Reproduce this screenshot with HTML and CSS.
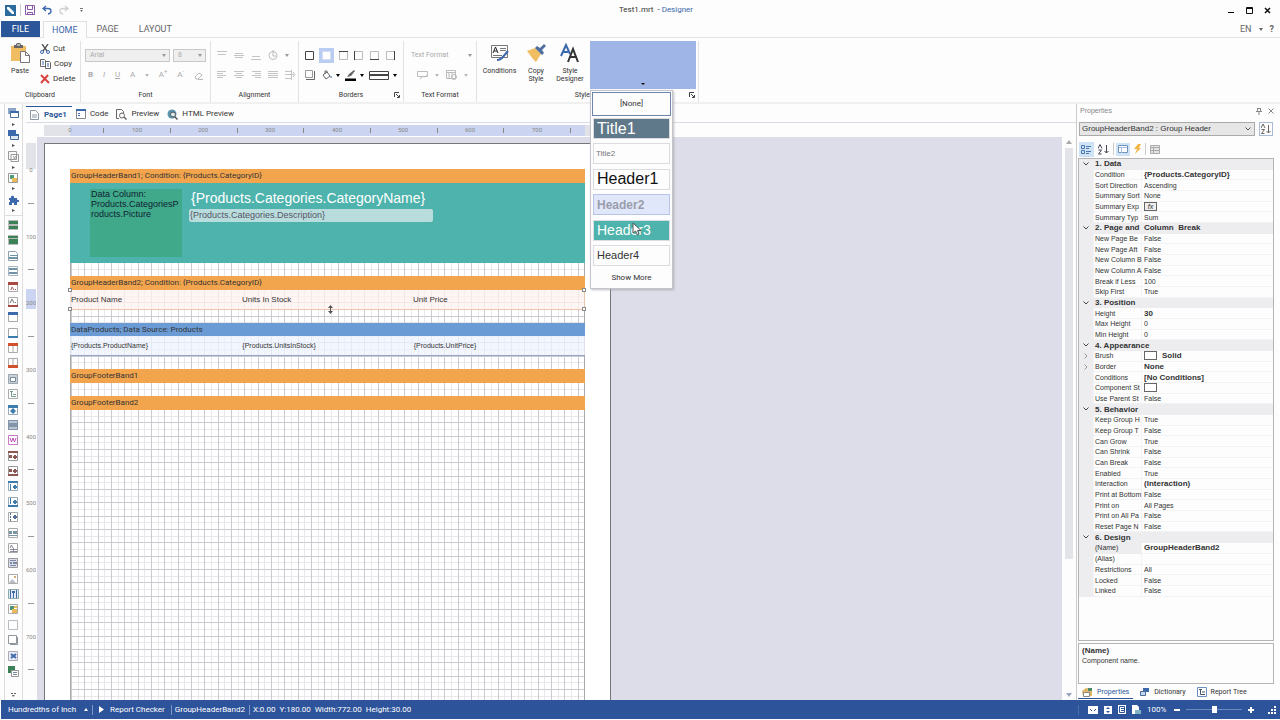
FILE: index.html
```html
<!DOCTYPE html>
<html lang="en">
<head>
<meta charset="UTF-8" />
<meta name="viewport" content="width=device-width, initial-scale=1.0"/>
<title>Test1.mrt - Designer</title>
<link rel="stylesheet" href="styles.css">
</head>
<body>
<header class="titlebar">
  <div class="quick-access">
    <svg width="11" height="11" viewBox="0 0 11 11"><path fill="#2b6b9e" d="M0 0h11v11H0z"/><path fill="#fff" d="M2 2h2l5 5v2H7L2 4z"/></svg>
    <span class="divider"></span>
    <button aria-label="Save"><svg width="10" height="10" viewBox="0 0 10 10" fill="none" stroke="#8a5aa8"><path d="M.5.5h9v9h-9zM2.500.5v4h5v-4M2.500 9.500v-2h5v2"/></svg></button>
    <button aria-label="Undo"><svg width="10" height="10" viewBox="0 0 10 10" fill="none" stroke="#3c68ac" stroke-width="1.300"><path d="M4 1L1 3.500 4 6M1 3.500h5c4 0 4 5 0 5.500"/></svg></button>
    <button aria-label="Redo"><svg width="10" height="10" viewBox="0 0 10 10" fill="none" stroke="#cfcfcf" stroke-width="1.300"><path d="M6 1l3 2.500L6 6M9 3.500H4c-4 0-4 5 0 5.500"/></svg></button>
    <button class="more" aria-label="Customize"><svg width="5" height="5" viewBox="0 0 5 5" fill="#777"><path d="M1 0h3v1H1zM1 2h3L2.500 4z"/></svg></button>
  </div>
  <div class="doc-title">Test1.mrt &nbsp;- <span>Designer</span></div>
  <div class="window-buttons">
    <button aria-label="Minimize"><svg width="7" height="7"><path d="M0 5h6v1H0z"/></svg></button>
    <button aria-label="Maximize"><svg width="7" height="7" fill="none" stroke="#111"><path d="M.5.5h6v6h-6zM0 1.500h7"/></svg></button>
    <button aria-label="Close"><svg width="7" height="7" stroke="#111" stroke-width="1.500"><path d="M1 1l5 5M6 1L1 6"/></svg></button>
  </div>
</header>

<nav class="tabs">
  <button class="file">FILE</button>
  <button class="active">HOME</button>
  <button>PAGE</button>
  <button>LAYOUT</button>
  <div class="lang">
    <button>EN</button>
    <svg width="4" height="3" fill="#666"><path d="M0 0h4L2 3z"/></svg>
    <button class="help">?</button>
  </div>
</nav>

<section class="ribbon">
  <div class="group clipboard">
    <div class="tools">
      <button class="big">
        <svg width="20" height="20" viewBox="0 0 20 20"><path fill="#f0bd62" d="M1 3h15v15H1z"/><path fill="#666" d="M4 2h2c0-3 5-3 5 0h2v3H4z"/><path fill="#fff" d="M7 1.500h3v1H7z"/><path fill="#fff" stroke="#777" d="M10.500 8.500h5l4 4v7h-9zM15.500 8.500v4h4"/></svg>
        Paste
      </button>
      <div class="stack">
        <button><svg width="10" height="10" viewBox="0 0 10 10" fill="none"><path stroke="#555" stroke-width="1.300" d="M2 0l5 7M8 0L3 7"/><circle cx="2" cy="8" r="1.500" stroke="#3c68ac"/><circle cx="8" cy="8" r="1.500" stroke="#3c68ac"/></svg>Cut</button>
        <button><svg width="11" height="10" viewBox="0 0 11 10" fill="#fff" stroke="#666"><path d="M.5.5h4l1 1v6h-5zM5.500 2.500h4l1 1v6h-5z"/><path stroke="#3c68ac" d="M2 3h2M2 5h2M7 5h2M7 7h2"/></svg>Copy</button>
        <button><svg width="10" height="10" viewBox="0 0 10 10" stroke="#d8453e" stroke-width="2"><path d="M1 1l8 8M8 1L1 9"/></svg>Delete</button>
      </div>
    </div>
    <h2>Clipboard</h2>
  </div>

  <div class="group font">
    <div class="tools rows">
      <div class="row">
        <label class="pick wide"><select aria-label="Font name" disabled><option>Arial</option></select><svg width="4" height="3" fill="#999"><path d="M0 0h4L2 3z"/></svg></label>
        <label class="pick"><select aria-label="Font size" disabled><option>8</option></select><svg width="4" height="3" fill="#999"><path d="M0 0h4L2 3z"/></svg></label>
      </div>
      <div class="row letters">
        <button disabled><b>B</b></button>
        <button disabled><i>I</i></button>
        <button disabled><u>U</u></button>
        <button disabled>A</button>
        <svg width="4" height="3" fill="#bbb"><path d="M0 0h4L2 3z"/></svg>
        <button disabled>A<sup>+</sup></button>
        <button disabled>A<sup>-</sup></button>
        <button disabled aria-label="Clear format"><svg width="9" height="9" viewBox="0 0 9 9" fill="none" stroke="#bbb"><path d="M1 6l4-4 3 2-4 4H2zM4 8.500h5"/></svg></button>
      </div>
    </div>
    <h2>Font</h2>
  </div>

  <div class="group alignment">
    <div class="tools rows">
      <div class="row">
        <button disabled aria-label="Top"><svg width="10" height="10" stroke="#c4c4c4"><path d="M0 1.500h10M1 4.500h8"/></svg></button>
        <button disabled aria-label="Middle"><svg width="10" height="10" stroke="#c4c4c4"><path d="M1 3.500h8M0 5.500h10M1 7.500h8"/></svg></button>
        <button disabled aria-label="Bottom"><svg width="10" height="10" stroke="#c4c4c4"><path d="M1 6.500h8M0 9.500h10"/></svg></button>
        <button disabled aria-label="Angle"><svg width="10" height="10" viewBox="0 0 10 10" fill="none" stroke="#bbb"><circle cx="5" cy="5.500" r="4"/><path d="M5 0v6h3"/></svg></button>
        <svg width="4" height="3" fill="#999"><path d="M0 0h4L2 3z"/></svg>
      </div>
      <div class="row">
        <button disabled aria-label="Left"><svg width="10" height="10" stroke="#c4c4c4"><path d="M0 1.500h9M0 3.500h6M0 5.500h9M0 7.500h6"/></svg></button>
        <button disabled aria-label="Center"><svg width="10" height="10" stroke="#c4c4c4"><path d="M0 1.500h10M2 3.500h6M0 5.500h10M2 7.500h6"/></svg></button>
        <button disabled aria-label="Right"><svg width="10" height="10" stroke="#c4c4c4"><path d="M1 1.500h9M4 3.500h6M1 5.500h9M4 7.500h6"/></svg></button>
        <button disabled aria-label="Justify"><svg width="10" height="10" stroke="#c4c4c4"><path d="M0 1.500h10M0 3.500h10M0 5.500h10M0 7.500h10"/></svg></button>
        <button disabled aria-label="Word wrap"><svg width="11" height="10" fill="none" stroke="#c4c4c4"><path d="M0 1.500h6M0 8.500h6M0 4.500h9M8 2l2 2.500L8 7M6.500 0v10"/></svg></button>
      </div>
    </div>
    <h2>Alignment</h2>
  </div>

  <div class="group borders">
    <div class="tools rows">
      <div class="row">
        <button aria-label="All"><svg width="9" height="9" fill="none" stroke="#444"><path d="M.5.5h8v8h-8z"/></svg></button>
        <button class="on" aria-label="None"><svg width="9" height="9" fill="#fff" stroke="#d3dcf0"><path d="M.5.5h8v8h-8z"/></svg></button>
        <button aria-label="Top border"><svg width="9" height="9" fill="none" stroke="#bbb"><path d="M.5.5h8v8h-8z"/><path stroke="#444" d="M0 .5h9"/></svg></button>
        <button aria-label="Left border"><svg width="9" height="9" fill="none" stroke="#bbb"><path d="M.5.5h8v8h-8z"/><path stroke="#444" d="M.5 0v9"/></svg></button>
        <button aria-label="Bottom border"><svg width="9" height="9" fill="none" stroke="#bbb"><path d="M.5.5h8v8h-8z"/><path stroke="#444" d="M0 8.500h9"/></svg></button>
        <button aria-label="Right border"><svg width="9" height="9" fill="none" stroke="#bbb"><path d="M.5.5h8v8h-8z"/><path stroke="#444" d="M8.500 0v9"/></svg></button>
      </div>
      <div class="row">
        <button aria-label="Shadow"><svg width="10" height="10" fill="none" stroke="#999"><path d="M.5.5h7v7h-7z"/><path stroke="#666" d="M1 9.500h8.500V1"/></svg></button>
        <button aria-label="Fill"><svg width="10" height="10" viewBox="0 0 10 10" fill="none" stroke="#666"><path d="M1 5l4-3 3 4-4 3zM3 4V1h2v2"/><path stroke="#3c68ac" d="M9 6v2"/></svg></button>
        <svg width="4" height="3"><path d="M0 0h4L2 3z"/></svg>
        <button aria-label="Line color"><svg width="11" height="11" viewBox="0 0 11 11"><path fill="#666" d="M2 7l2-3 5-4 1 1-4 5z"/><path d="M0 8.500h11V11H0z"/></svg></button>
        <svg width="4" height="3"><path d="M0 0h4L2 3z"/></svg>
        <button aria-label="Line style"><svg width="20" height="9" fill="none" stroke="#444"><path d="M.5.5h19v8H.5z"/><path stroke-width="2" d="M1 4h18"/></svg></button>
        <svg width="4" height="3"><path d="M0 0h4L2 3z"/></svg>
      </div>
    </div>
    <h2>Borders</h2>
    <button class="launcher" aria-label="Borders dialog"><svg width="6" height="6" stroke="#444" fill="none"><path d="M.5 5V.5H5M2 2l3 3M5.500 3v2.500H3"/></svg></button>
  </div>

  <div class="group text-format">
    <div class="tools rows">
      <div class="row spread">
        <span class="faded">Text Format</span>
        <svg width="4" height="3" fill="#999"><path d="M0 0h4L2 3z"/></svg>
      </div>
      <div class="row indent">
        <button disabled aria-label="Currency"><svg width="11" height="10" fill="none" stroke="#bbb"><path d="M.5 1.500h10v5H.5zM3 9c3-5 6 0 7-4"/></svg></button>
        <svg width="4" height="3" fill="#bbb"><path d="M0 0h4L2 3z"/></svg>
        <button disabled aria-label="Date"><svg width="11" height="10" fill="none" stroke="#bbb"><path d="M.5.5h9v8h-9zM0 2.500h9M3 3v5M6 3v5"/><circle cx="8" cy="7" r="2.500"/></svg></button>
        <svg width="4" height="3" fill="#bbb"><path d="M0 0h4L2 3z"/></svg>
      </div>
    </div>
    <h2>Text Format</h2>
  </div>

  <div class="group style">
    <div class="tools">
      <button class="big conditions">
        <svg width="20" height="20" viewBox="0 0 20 20" fill="none" stroke="#777"><path d="M1.500 2.500h16v12h-16z"/><path stroke="#222" d="M3 10l2.500-6L8 10M4 8h3"/><path d="M10 5.500h6M10 7.500h6M3 12.500h9"/><path stroke="#3c68ac" stroke-width="2" d="M18 8l-6 7c-1 1-3 2-5 2"/></svg>
        Conditions
      </button>
      <button class="big copy-style">
        <svg width="20" height="20" viewBox="0 0 20 20"><path fill="#f0bd62" d="M1 8l8-3 6 6-5 8-3-3z"/><path fill="#4e6f9f" d="M9 5l2-2 3 2 4-4 2 2-4 4 2 3-2 2z"/></svg>
        Copy<br>Style
      </button>
      <button class="big style-designer">
        <svg width="20" height="20" viewBox="0 0 20 20" fill="none" stroke-width="2"><path stroke="#3c68ac" d="M1 13L6 2l4 9M3 9h5"/><path stroke="#333" d="M8 19l5-13 5 13M10 14h6"/></svg>
        Style<br>Designer
      </button>
      <div class="gallery">
        <button class="gallery-button" aria-label="Styles"><svg width="4" height="2"><path d="M0 0h4L2 2z"/></svg></button>
        <div class="style-menu">
          <button class="none">[None]</button>
          <div class="items">
            <button class="title1">Title1</button>
            <button class="title2">Title2</button>
            <button class="header1">Header1</button>
            <button class="header2">Header2</button>
            <button class="header3">Header3</button>
            <button class="header4">Header4</button>
          </div>
          <button class="show-more">Show More</button>
          <svg class="cursor" width="10" height="14" viewBox="0 0 10 14"><path fill="#fff" stroke="#555" d="M1 1v10l2.500-2 2 4 1.500-1-1.500-3.500H9z"/></svg>
        </div>
      </div>
    </div>
    <h2>Style</h2>
    <button class="launcher" aria-label="Styles dialog"><svg width="6" height="6" stroke="#444" fill="none"><path d="M.5 5V.5H5M2 2l3 3M5.500 3v2.500H3"/></svg></button>
  </div>
</section>

<main>
  <aside class="toolbox">
    <div class="categories">
      <svg width="11" height="11"><path fill="#8aa5c8" d="M0 0h8v6H0z"/><path fill="#fff" stroke="#4b6d9d" d="M2.500 3.500h8v6h-8z"/><path fill="#3c68ac" d="M2 3h9v2H2z"/></svg>
      <svg width="3" height="3" fill="#555"><path d="M0 0l3 1.500L0 3z"/></svg>
      <svg width="11" height="11"><path fill="#3c68ac" d="M0 0h8v6H0z"/><path fill="#dde5f0" stroke="#4b6d9d" d="M2.500 4.500h8v5h-8z"/><path fill="#3c68ac" d="M2 4h9v2H2z"/></svg>
      <svg width="3" height="3" fill="#555"><path d="M0 0l3 1.500L0 3z"/></svg>
      <svg width="11" height="11" fill="none" stroke="#999"><path d="M.5.5h8v8h-8zM3 3.500h7.500v7H3zM5 5l3 4M8 5L5 9"/></svg>
      <svg width="3" height="3" fill="#555"><path d="M0 0l3 1.500L0 3z"/></svg>
      <svg width="11" height="11"><path fill="#fff" stroke="#999" d="M.5.5h9v9h-9z"/><path fill="#4c9f78" d="M2 2h4v4H2z"/><path fill="#e9bb59" d="M4 5h5v4H4z"/></svg>
      <svg width="3" height="3" fill="#555"><path d="M0 0l3 1.500L0 3z"/></svg>
      <svg width="11" height="11"><path fill="#3c68ac" d="M1 4h2c-1-3 4-3 3 0h3v2c3-1 3 3 0 2v3H6c1-3-3-3-2 0H1V8h1V6H1z"/></svg>
      <svg width="3" height="3" fill="#555"><path d="M0 0l3 1.500L0 3z"/></svg>
    </div>
    <div class="components">
      <svg width="11" height="11"><path fill="#bbb" d="M0 0h10v10H0z"/><path fill="#3b8156" d="M1 1h9v3H1zM1 6h9v3H1z"/></svg>
      <svg width="11" height="11"><path fill="#bbb" d="M0 0h10v10H0z"/><path fill="#3b8156" d="M0 1h10v2H0zM1 4h9v5H1z"/></svg>
      <svg width="11" height="11"><path fill="#fff" stroke="#8fa0ac" d="M.5.5h7l2 2v7h-9z"/><path fill="#6f93a8" d="M2 4h8v1H2zM1 6h9v2H1z"/></svg>
      <svg width="11" height="11"><path fill="#fff" stroke="#a9b4bd" d="M.5.5h9v9h-9z"/><path fill="#6f93a8" d="M1 2h8v2H1zM1 6h8v2H1z"/></svg>
      <svg width="11" height="11"><path fill="#fff" stroke="#aaa" d="M.5.5h9v9h-9z"/><path fill="#a84a42" d="M0 0h10v3H0z"/><path fill="none" stroke="#a66" d="M3 8l1-3 2 3M7 7.500h1"/></svg>
      <svg width="11" height="11"><path fill="#fff" stroke="#aaa" d="M.5.5h9v9h-9z"/><path fill="#a84a42" d="M0 8h10v2H0z"/><path fill="none" stroke="#777" d="M2 6l2-4 2 4M7 5.500h1"/></svg>
      <svg width="11" height="11"><path fill="#fff" stroke="#aaa" d="M.5.5h9v9h-9z"/><path fill="#3c68ac" d="M0 0h10v3H0z"/></svg>
      <svg width="11" height="11"><path fill="#fff" stroke="#aaa" d="M.5.5h9v9h-9z"/><path fill="#3c7dac" d="M0 8h10v2H0z"/></svg>
      <svg width="11" height="11"><path fill="#fff" stroke="#aaa" d="M.5.5h9v9h-9zM5 1v9"/><path fill="#d1512f" d="M0 0h10v3H0z"/></svg>
      <svg width="11" height="11"><path fill="#fff" stroke="#aaa" d="M.5.5h9v9h-9zM5 1v9"/><path fill="#d1512f" d="M0 7h10v3H0z"/></svg>
      <svg width="11" height="11"><path fill="#c9d1d8" stroke="#9aa5af" d="M.5.5h9v9h-9z"/><path fill="#fff" stroke="#789" d="M2.500 3.500h5v4h-5z"/></svg>
      <svg width="11" height="11"><path fill="#fff" stroke="#aaa" d="M.5.5h9v9h-9z"/><path fill="none" stroke="#789a8a" d="M2 2.500h3M3.500 3v4.500H8M5 5.500h3"/></svg>
      <svg width="11" height="11"><path fill="#fff" stroke="#9ab" d="M.5.5h9v9h-9z"/><path fill="#3c7dac" d="M0 0h10v3H0zM5 3l3 3-3 3-3-3z"/></svg>
      <svg width="11" height="11"><path fill="#8494a8" d="M0 0h10v10H0z"/><path fill="#b6c4d3" d="M1 1h8v2H1zM1 7h8v2H1z"/></svg>
      <svg width="11" height="11"><path fill="#fff" stroke="#c879c5" d="M.5.5h9v9h-9z"/><path fill="none" stroke="#bd4fb8" d="M2 3l1.500 4L5 3l1.500 4L8 3"/></svg>
      <svg width="11" height="11"><path fill="#fff" stroke="#999" d="M.5.5h9v9h-9z"/><path fill="#8b5550" d="M0 0h10v2H0zM1 4h3v3H1zM5 5h4v2H5zM6 4h2v4H6z"/></svg>
      <svg width="11" height="11"><path fill="#fff" stroke="#999" d="M.5.5h9v9h-9z"/><path fill="#8b5550" d="M0 8h10v2H0zM1 3h3v3H1zM5 4h4v2H5zM6 3h2v4H6z"/></svg>
      <svg width="11" height="11"><path fill="#fff" stroke="#9ab" d="M.5.5h9v9h-9z"/><path fill="#3c7dac" d="M0 0h10v2H0zM5 5h4v2H5zM6 4h2v4H6zM2 3h1v6H2z"/></svg>
      <svg width="11" height="11"><path fill="#fff" stroke="#9ab" d="M.5.5h9v9h-9z"/><path fill="#3c7dac" d="M0 8h10v2H0zM5 4h4v2H5zM6 3h2v4H6zM2 1h1v6H2z"/></svg>
      <svg width="11" height="11"><path fill="#fff" stroke="#aaa" d="M.5.5h9v9h-9z"/><path fill="#567093" d="M5 4h4v2H5zM6 3h2v4H6zM2 1h1v2H2zM2 4h1v2H2zM2 7h1v2H2z"/></svg>
      <svg width="11" height="11"><path fill="#fff" stroke="#aaa" d="M.5.5h9v9h-9z"/><path fill="#7895a5" d="M1 3h3v3H1zM5 3h4v3H5zM1 7h8v1H1z"/></svg>
      <svg width="11" height="11"><path fill="#fff" stroke="#aaa" d="M.5.5h9v9h-9z"/><path fill="none" stroke="#889" d="M2 5l1.500-3L5 5M2 6.500h7M2 8.500h7M5.500 5v4"/></svg>
      <svg width="11" height="11"><path fill="#dde" stroke="#999" d="M.5.5h9v9h-9z"/><path fill="#7b8aa3" d="M2 2h6v1H2zM2 4h2v2H2zM5 4h4v2H5zM2 7h6v1H2z"/></svg>
      <svg width="11" height="11"><path fill="#fff" stroke="#aaa" d="M.5.5h9v9h-9z"/><path fill="#d9a875" d="M6 2h2v2H6z"/><path fill="#b9bcc7" d="M1 9l3-4 4 4z"/></svg>
      <svg width="11" height="11"><path fill="#e3eaf3" stroke="#8aa" d="M.5.5h10v9H.5z"/><path fill="#3c68ac" d="M2 1h1v8H2zM5 3h1v6H5zM8 1h1v8H8zM4 2h3v2H4z"/></svg>
      <svg width="11" height="11"><path fill="#fff" stroke="#aaa" d="M.5.5h9v9h-9z"/><path fill="#4d9377" d="M2 2h4v4H2z"/><path fill="#e9bb59" d="M4 5h5v4H4zM6 2h3v2H6z"/></svg>
      <svg width="11" height="11" fill="#fff" stroke="#b5bcc2"><path d="M.5.5h9v9h-9z"/></svg>
      <svg width="11" height="11" fill="#fff" stroke="#8f969c"><path d="M.5.5h8v8h-8zM2 9.500h7.500V2"/></svg>
      <svg width="11" height="11"><path fill="#e8edf4" stroke="#aab" d="M.5.5h9v9h-9z"/><path stroke="#3c68ac" stroke-width="2" d="M3 3l5 4M8 3L3 7"/></svg>
      <svg width="11" height="11"><path fill="#3b8156" d="M0 0h7v7H0z"/><path fill="#fff" stroke="#999" d="M3.500 4.500h7v6h-7z"/><path fill="#789" d="M5 6h4v1H5zM5 8h4v1H5z"/></svg>
    </div>
    <svg class="overflow" width="5" height="5" fill="#666"><path d="M0 0h2v1H0zM3 0h2v1H3zM1 2h3L2 4z"/></svg>
  </aside>

  <section class="editor">
    <nav class="views">
      <button class="active"><svg width="9" height="10" fill="#fff" stroke="#8a98a8"><path d="M.5.5h5l3 3v6h-8zM2 5h5M2 7h5"/></svg>Page1</button>
      <button><svg width="10" height="10"><path fill="#fff" stroke="#888" d="M.5.5h9v9h-9z"/><path fill="#3c68ac" d="M0 0h10v2H0zM2 4h2v1H2zM2 6h2v1H2z"/></svg>Code</button>
      <button><svg width="11" height="11" fill="none" stroke="#666"><path d="M3 9.500H.5v-9h5l2 2V4"/><circle cx="6" cy="6.500" r="2.500"/><path stroke-width="1.500" d="M8 8l2.500 2.500"/></svg>Preview</button>
      <button><svg width="11" height="11" fill="none"><circle cx="5" cy="5" r="4.500" fill="#5b94ad"/><circle cx="6" cy="5.500" r="2.500" fill="#dcebf0" stroke="#555"/><path stroke="#555" stroke-width="1.500" d="M8 8l2.500 2.500"/></svg>HTML Preview</button>
    </nav>
    <div class="ruler-x">
      <svg width="567" height="11">
        <path fill="#e2e2e9" d="M0 0h567v11H0z"/><path fill="#cbd5f1" d="M26 0h515v11H26z"/>
        <path stroke="#888" d="M59.500 3v5M126.500 3v5M193.500 3v5M259.500 3v5M326.500 3v5M393.500 3v5M459.500 3v5M526.500 3v5"/>
        <g class="marks"><text x="26" y="7">0</text><text x="93" y="7">100</text><text x="159" y="7">200</text><text x="226" y="7">300</text><text x="293" y="7">400</text><text x="359" y="7">500</text><text x="426" y="7">600</text><text x="493" y="7">700</text></g>
      </svg>
    </div>
    <div class="surface">
      <div class="ruler-y">
        <svg width="10" height="100%">
          <path fill="#e2e2e9" d="M0 0h10v26H0z"/><path fill="#cbd5f1" d="M0 146h10v20H0z"/>
          <path stroke="#999" d="M2 60.500h6M2 126.500h6M2 193.500h6M2 260.500h6M2 326.500h6M2 393.500h6M2 460.500h6M2 526.500h6"/>
          <g class="marks"><text x="5" y="29">0</text><text x="5" y="96">100</text><text x="5" y="162">200</text><text x="5" y="229">300</text><text x="5" y="296">400</text><text x="5" y="362">500</text><text x="5" y="429">600</text><text x="5" y="496">700</text></g>
        </svg>
      </div>
      <div class="canvas">
        <div class="page">
          <svg class="grid" width="100%" height="100%">
            <defs>
              <pattern id="cells" width="40" height="40" patternUnits="userSpaceOnUse">
                <path fill="none" stroke="#e9e7ec" d="M7.500 0v40M20.500 0v40M33.500 0v40M0 7.500h40M0 20.500h40M0 33.500h40"/>
                <path fill="none" stroke="#cbcad0" d="M.5 0v40M13.500 0v40M27.500 0v40M0 .5h40M0 13.500h40M0 27.500h40"/>
              </pattern>
            </defs>
            <rect width="100%" height="100%" fill="url(#cells)"/>
          </svg>
          <div class="bands">
            <div class="band">
              <div class="band-name">GroupHeaderBand1; Condition: {Products.CategoryID}</div>
              <div class="band-body category">
                <div class="picture">Data Column:<br>Products.CategoriesP<br>roducts.Picture</div>
                <div class="category-text">
                  <div class="name">{Products.Categories.CategoryName}</div>
                  <div class="description">{Products.Categories.Description}</div>
                </div>
              </div>
            </div>
            <div class="band">
              <div class="band-name">GroupHeaderBand2; Condition: {Products.CategoryID}</div>
              <div class="band-body columns selected">
                <span>Product Name</span><span>Units In Stock</span><span>Unit Price</span>
                <i class="handle tl"></i><i class="handle tr"></i><i class="handle bl"></i><i class="handle br"></i>
                <svg class="resize" width="7" height="9"><path fill="#555" d="M3.500 0L6 3H4v3h2L3.500 9 1 6h2V3H1z"/></svg>
              </div>
            </div>
            <div class="band data">
              <div class="band-name">DataProducts; Data Source: Products</div>
              <div class="band-body columns fields">
                <span>{Products.ProductName}</span><span>{Products.UnitsInStock}</span><span>{Products.UnitPrice}</span>
              </div>
            </div>
            <div class="band"><div class="band-name">GroupFooterBand1</div></div>
            <div class="band"><div class="band-name">GroupFooterBand2</div></div>
          </div>
        </div>
      </div>
      <div class="scrollbar">
        <svg width="6" height="4" fill="#aaa"><path d="M0 4h6L3 0z"/></svg>
        <div class="track"><div class="thumb"></div></div>
        <svg width="6" height="4" fill="#9aa5c0"><path d="M0 0h6L3 4z"/></svg>
      </div>
    </div>
  </section>

  <aside class="properties">
    <div class="panel-title">
      <span>Properties</span>
      <svg width="6" height="7" fill="none" stroke="#888"><path d="M1.500 0v3.500M4.500 0v3.500M0 3.500h6M3 4v3M1 .5h4"/></svg>
      <svg width="6" height="6" stroke="#888"><path d="M.5.5l5 5M5.500.5l-5 5"/></svg>
    </div>
    <div class="object">
      <label class="pick"><select aria-label="Component"><option>GroupHeaderBand2 : Group Header</option></select><svg width="6" height="4" fill="none" stroke="#555"><path d="M.5.5L3 3 5.500.5"/></svg></label>
      <button aria-label="Sort"><svg width="10" height="10" fill="none" stroke="#666"><path d="M0 4l2-4 2 4M.5 5.500h3l-3 4h3M7.500 1v8M5.500 7l2 2 2-2"/></svg></button>
    </div>
    <div class="panel-tools">
      <button class="on" aria-label="Categorized"><svg width="11" height="11" fill="none" stroke="#4b76ad"><path d="M.5 1.500h3v3h-3zM.5 6.500h3v3h-3zM5 2.500h5M5 4.500h3M5 7.500h5M5 9.500h3"/></svg></button>
      <button aria-label="Alphabetical"><svg width="11" height="11" fill="none" stroke="#445"><path d="M0 4.500l2-4 2 4M.5 6h3l-3 4h3M8.500 1v8M6.500 7l2 2 2-2"/></svg></button>
      <span class="divider"></span>
      <button class="on" aria-label="Properties"><svg width="10" height="9"><path fill="#fff" stroke="#6f92bd" d="M.5.5h9v7h-9z"/><path stroke="#a9c1de" d="M1 2.500h8M3.500 2v6"/></svg></button>
      <button aria-label="Events"><svg width="7" height="10" fill="#f2b548"><path d="M4 0h3L5 4h2L1 10l2-5H0z"/></svg></button>
      <span class="divider"></span>
      <button aria-label="Localize"><svg width="10" height="9" fill="#e4e4e4" stroke="#aaa"><path d="M.5.5h9v8h-9zM0 2.500h10M3.500 2v6M0 5.500h10"/></svg></button>
    </div>
    <div class="property-box">
      <table>
        <colgroup><col class="col-mark"><col class="col-name"><col></colgroup>
        <tbody>
          <tr class="section"><td><svg width="6" height="4"><path d="M.5.5L3 3 5.500.5"/></svg></td><th colspan="2">1. Data</th></tr>
          <tr><td></td><th>Condition</th><td><b>{Products.CategoryID}</b></td></tr>
          <tr><td></td><th>Sort Direction</th><td>Ascending</td></tr>
          <tr><td></td><th>Summary Sort</th><td>None</td></tr>
          <tr><td></td><th>Summary Exp</th><td><span class="swatch fx">fx</span></td></tr>
          <tr><td></td><th>Summary Typ</th><td>Sum</td></tr>
          <tr class="section"><td><svg width="6" height="4"><path d="M.5.5L3 3 5.500.5"/></svg></td><th colspan="2">2. Page and&nbsp; Column&nbsp; Break</th></tr>
          <tr><td></td><th>New Page Be</th><td>False</td></tr>
          <tr><td></td><th>New Page Aft</th><td>False</td></tr>
          <tr><td></td><th>New Column B</th><td>False</td></tr>
          <tr><td></td><th>New Column A</th><td>False</td></tr>
          <tr><td></td><th>Break if Less</th><td>100</td></tr>
          <tr><td></td><th>Skip First</th><td>True</td></tr>
          <tr class="section"><td><svg width="6" height="4"><path d="M.5.5L3 3 5.500.5"/></svg></td><th colspan="2">3. Position</th></tr>
          <tr><td></td><th>Height</th><td><b>30</b></td></tr>
          <tr><td></td><th>Max Height</th><td>0</td></tr>
          <tr><td></td><th>Min Height</th><td>0</td></tr>
          <tr class="section"><td><svg width="6" height="4"><path d="M.5.5L3 3 5.500.5"/></svg></td><th colspan="2">4. Appearance</th></tr>
          <tr><td><svg class="closed" width="4" height="6"><path d="M.5.5L3 3 .5 5.500"/></svg></td><th>Brush</th><td><span class="swatch"></span><b>Solid</b></td></tr>
          <tr><td><svg class="closed" width="4" height="6"><path d="M.5.5L3 3 .5 5.500"/></svg></td><th>Border</th><td><b>None</b></td></tr>
          <tr><td></td><th>Conditions</th><td><b>[No Conditions]</b></td></tr>
          <tr><td></td><th>Component St</th><td><span class="swatch"></span></td></tr>
          <tr><td></td><th>Use Parent St</th><td>False</td></tr>
          <tr class="section"><td><svg width="6" height="4"><path d="M.5.5L3 3 5.500.5"/></svg></td><th colspan="2">5. Behavior</th></tr>
          <tr><td></td><th>Keep Group H</th><td>True</td></tr>
          <tr><td></td><th>Keep Group T</th><td>False</td></tr>
          <tr><td></td><th>Can Grow</th><td>True</td></tr>
          <tr><td></td><th>Can Shrink</th><td>False</td></tr>
          <tr><td></td><th>Can Break</th><td>False</td></tr>
          <tr><td></td><th>Enabled</th><td>True</td></tr>
          <tr><td></td><th>Interaction</th><td><b>(Interaction)</b></td></tr>
          <tr><td></td><th>Print at Bottom</th><td>False</td></tr>
          <tr><td></td><th>Print on</th><td>All Pages</td></tr>
          <tr><td></td><th>Print on All Pa</th><td>False</td></tr>
          <tr><td></td><th>Reset Page N</th><td>False</td></tr>
          <tr class="section"><td><svg width="6" height="4"><path d="M.5.5L3 3 5.500.5"/></svg></td><th colspan="2">6. Design</th></tr>
          <tr class="current"><td></td><th>(Name)</th><td><b>GroupHeaderBand2</b></td></tr>
          <tr><td></td><th>(Alias)</th><td></td></tr>
          <tr><td></td><th>Restrictions</th><td>All</td></tr>
          <tr><td></td><th>Locked</th><td>False</td></tr>
          <tr><td></td><th>Linked</th><td>False</td></tr>
        </tbody>
      </table>
    </div>
    <div class="help-box"><b>(Name)</b><p>Component name.</p></div>
    <nav class="panel-tabs">
      <button class="active"><svg width="11" height="10"><path fill="#e0b566" d="M0 4l4-3 6 1v7H1z"/><path fill="#fff" stroke="#888" d="M1.500 5.500h6v4h-6z"/><path fill="#4d8a67" d="M6 1h4v3H6z"/></svg>Properties</button>
      <button><svg width="10" height="9"><path fill="#3c68ac" d="M3 0h6v4H3z"/><path fill="#c7d7ea" stroke="#4b6d9d" d="M.5 3.500h5v4h-5z"/></svg>Dictionary</button>
      <button><svg width="10" height="10" fill="none" stroke="#6f8fc0"><path d="M.5.5h9v9h-9z"/><path stroke="#456" d="M2 2.500h3M3.500 3v4.500H8M5 5h3"/></svg>Report Tree</button>
    </nav>
  </aside>
</main>

<footer class="statusbar">
  <button class="units">Hundredths of Inch <svg width="4" height="3"><path d="M0 3h4L2 0z"/></svg></button>
  <button class="checker"><svg width="5" height="7"><path d="M0 0l5 3.500L0 7z"/></svg>Report Checker</button>
  <span class="cell">GroupHeaderBand2</span>
  <span class="cell">X:0.00 &nbsp;Y:180.00 &nbsp;Width:772.00 &nbsp;Height:30.00</span>
  <div class="zoom">
    <button aria-label="Page width"><svg width="10" height="8"><path d="M0 0h10v8H0z"/><path class="ink" d="M2 3l2 2M8 3L6 5"/></svg></button>
    <button aria-label="One page"><svg width="8" height="8"><path d="M0 0h8v8H0z"/><path fill="#2d539b" d="M4 1l2 2H2zM4 7L2 5h4z"/></svg></button>
    <button aria-label="Full page"><svg width="8" height="9"><path d="M0 0h8v9H0z"/><path class="ink" d="M1.500 1.500h5v6h-5zM3 3.500h3M3 5.500h3"/></svg></button>
    <button aria-label="Pages"><svg width="9" height="9"><path d="M0 0h5l2 2v7H0z"/><path fill="#7fb2c4" d="M3 5h6v4H3z"/></svg></button>
    <span>100%</span>
    <button aria-label="Zoom out"><svg width="6" height="6"><path d="M0 2h6v2H0z"/></svg></button>
    <input type="range" min="0" max="200" value="100" aria-label="Zoom">
    <button aria-label="Zoom in"><svg width="6" height="6"><path d="M0 2h2V0h2v2h2v2H4v2H2V4H0z"/></svg></button>
    <svg class="grip" width="8" height="8"><path d="M6 0h2v2H6zM3 3h2v2H3zM6 3h2v2H6zM0 6h2v2H0zM3 6h2v2H3zM6 6h2v2H6z"/></svg>
  </div>
</footer>
</body>
</html>
```
FILE: styles.css
```css
* {
  box-sizing: border-box;
}

body {
  margin: 0;
  height: 100vh;
  display: flex;
  flex-direction: column;
  overflow: hidden;
  background: #fdfdfd;
  color: #333;
  font: 8px/10px Roboto, sans-serif;
}

button,
select {
  margin: 0;
  padding: 0;
  border: 0;
  background: none;
  color: inherit;
  font: inherit;
}

svg {
  display: block;
  flex: none;
}

h2,
p {
  margin: 0;
  font: inherit;
}

/* Title bar */
.titlebar {
  display: flex;
  align-items: center;
  height: 20px;
  padding: 0 9px 0 5px;
}

.quick-access {
  display: flex;
  align-items: center;
  gap: 4px;
}

.quick-access .more {
  margin-left: 6px;
}

.quick-access button + button {
  margin-left: 3px;
}

.divider {
  width: 1px;
  height: 12px;
  background: #ccc;
}

.doc-title {
  flex: 1;
  text-align: center;
}

.doc-title span {
  color: #3c68ac;
}

.window-buttons {
  display: flex;
  gap: 11px;
}

/* Ribbon tabs */
.tabs {
  display: flex;
  height: 18px;
  padding: 1px 6px 0 1px;
  border-bottom: 1px solid #e6e6e6;
  color: #666;
  font-size: 9px;
}

.tabs > button {
  padding: 0 10px;
}

.tabs .file {
  width: 39px;
  margin-right: 3px;
  background: #2b579a;
  color: #fff;
}

.tabs .active {
  margin-bottom: -1px;
  padding: 0 8px;
  border: 1px solid #e0e0e0;
  border-bottom: 0;
  background: #fdfdfd;
  color: #3c68ac;
}

.lang {
  display: flex;
  align-items: center;
  gap: 7px;
  margin-left: auto;
}

.lang .help {
  font-weight: bold;
}

/* Ribbon */
.ribbon {
  display: flex;
  height: 66px;
  padding-top: 3px;
  border-bottom: 2px solid #f0f0f0;
  font-size: 7px;
}

.group {
  position: relative;
  display: flex;
  flex-direction: column;
  border-right: 1px solid #e2e2e2;
}

.group h2 {
  padding-bottom: 2px;
  text-align: center;
}

.tools {
  flex: 1;
  display: flex;
}

.rows {
  flex-direction: column;
  gap: 4px;
  padding: 6px 4px 0;
}

.row {
  display: flex;
  align-items: center;
  height: 16px;
}

.clipboard { width: 81px; }
.font { width: 130px; }
.alignment { width: 88px; }
.borders { width: 105px; }
.text-format { width: 73px; }
.style { width: 222px; }

.big {
  display: flex;
  flex-direction: column;
  align-items: center;
  gap: 4px;
  padding-top: 2px;
  line-height: 8px;
}

.clipboard .big {
  width: 40px;
}

.stack {
  display: flex;
  flex-direction: column;
  gap: 5px;
  padding-top: 3px;
  font-size: 8px;
}

.stack button {
  display: flex;
  align-items: center;
  gap: 3px;
}

.pick {
  display: grid;
  align-items: center;
}

.pick select,
.pick svg {
  grid-area: 1 / 1;
}

.pick select {
  appearance: none;
  width: 100%;
  height: 13px;
  padding: 0 4px;
  border: 1px solid #c8c8c8;
  background: #efefef;
}

.pick svg {
  justify-self: end;
  margin-right: 4px;
  pointer-events: none;
}

.font .pick {
  width: 33px;
  color: #aaa;
}

.font .pick.wide {
  width: 85px;
  margin-right: 3px;
}

.font select:disabled {
  opacity: 1;
}

.letters {
  justify-content: space-between;
  padding: 0 3px;
  color: #aaa;
  font-size: 8px;
}

.letters sup {
  font-size: 6px;
  line-height: 1px;
}

.alignment .row {
  gap: 7px;
  padding-left: 2px;
}

.borders .row {
  justify-content: space-between;
  padding-right: 2px;
}

.borders button {
  padding: 3px 2px;
}

.borders .on {
  padding: 3px;
  background: #b9cdf2;
}

.borders .launcher,
.style .launcher {
  position: absolute;
  right: 3px;
  bottom: 4px;
  padding: 0;
}

.spread {
  justify-content: space-between;
  padding-left: 3px;
}

.faded {
  color: #aaa;
}

.indent {
  gap: 7px;
  padding-left: 9px;
}

.conditions { width: 45px; }
.copy-style { width: 28px; }
.style-designer { width: 40px; }

/* The group label stays left of the open menu */
.style h2 {
  width: 113px;
  text-align: right;
}

.gallery {
  position: relative;
}

.gallery-button {
  display: flex;
  align-items: flex-end;
  justify-content: center;
  width: 106px;
  height: 48px;
  padding-bottom: 4px;
  background: #a0b5e7;
}

/* Style drop-down */
.style-menu {
  position: absolute;
  z-index: 2;
  top: 49px;
  left: 0;
  width: 83px;
  padding: 1px;
  border: 1px solid #c4c4cc;
  background: #fdfdfd;
  box-shadow: 1px 1px 2px #8888;
  font-size: 8px;
}

.style-menu button {
  display: block;
  width: 100%;
}

.style-menu .none {
  height: 24px;
  border: 1px solid #6c86ad;
}

.items {
  display: flex;
  flex-direction: column;
  justify-content: space-between;
  height: 152px;
  padding: 2px 1px;
}

.items button {
  height: 21px;
  padding: 0 3px;
  border: 1px solid #dcdce0;
  text-align: left;
  font-family: "Liberation Sans", sans-serif;
}

.items .title1 {
  background: #60798a;
  color: #fff;
  font-size: 16px;
}

.items .title2 {
  padding-left: 2px;
  color: #777;
}

.items .header1 {
  color: #111;
  font-size: 16px;
}

.items .header2 {
  background: #e0e7fa;
  border-color: #b9c5e6;
  color: #9a9dab;
  font-size: 12px;
  font-weight: bold;
}

.items .header3 {
  background: #4db3ac;
  color: #fff;
  font-size: 14px;
}

.items .header4 {
  font-size: 11px;
}

.style-menu .show-more {
  height: 19px;
}

.cursor {
  position: absolute;
  top: 131px;
  left: 41px;
}

/* Work area */
main {
  flex: 1;
  display: flex;
  min-height: 0;
}

.toolbox {
  display: flex;
  flex-direction: column;
  align-items: center;
  width: 19px;
  margin-left: 4px;
  padding-top: 4px;
  border: 1px solid #ddd;
  border-width: 0 1px;
}

.categories,
.components {
  display: flex;
  flex-direction: column;
  align-items: center;
  justify-content: space-between;
}

.categories {
  width: 100%;
  height: 108px;
  padding-bottom: 3px;
  border-bottom: 1px solid #ddd;
}

.components {
  height: 461px;
  padding-top: 4px;
}

.overflow {
  margin-top: auto;
  margin-bottom: 2px;
}

.editor {
  flex: 1;
  display: flex;
  flex-direction: column;
  min-width: 0;
  padding-left: 3px;
}

.views {
  display: flex;
  height: 19px;
  padding-top: 2px;
  border-bottom: 1px solid #d8dce6;
}

.views button {
  display: flex;
  align-items: center;
  gap: 4px;
  padding: 0 4px;
}

.views .active {
  gap: 5px;
  padding-right: 5px;
  border-top: 1px solid #2b579a;
  color: #2b579a;
  font-weight: bold;
}

.ruler-x {
  padding: 2px 0 1px 18px;
}

.marks {
  fill: #888;
  font-size: 6px;
  text-anchor: middle;
}

.surface {
  flex: 1;
  display: flex;
  min-height: 0;
}

.ruler-y {
  width: 11px;
  padding-top: 6px;
  overflow: hidden;
}

.canvas {
  flex: 1;
  display: flex;
  padding: 6px 0 0 7px;
  background: #dcdde9;
  overflow: hidden;
}

.page {
  position: relative;
  width: 567px;
  padding: 25px 25px 0;
  border: 1px solid #777;
  border-bottom: 0;
  background: #fff;
}

.grid {
  width: 515px;
  border: 1px solid #aaa;
  border-width: 0 1px;
}

/* Report bands lie over the page grid */
.bands {
  position: absolute;
  inset: 25px 25px auto;
  display: flex;
  flex-direction: column;
  gap: 13px;
}

.band-name {
  height: 14px;
  padding: 1px;
  background: #f3a54e;
  line-height: 12px;
}

.data .band-name {
  height: 13px;
  background: #6b9bd4;
  line-height: 11px;
}

.category {
  display: flex;
  gap: 7px;
  height: 80px;
  padding: 6px 20px;
  background: #4db3ac;
  font-family: "Liberation Sans", sans-serif;
  font-size: 9px;
}

.picture {
  width: 92px;
  height: 68px;
  padding: 0 1px;
  background: #3fa98a;
  color: #123;
}

.category-text {
  width: 244px;
}

.category-text .name {
  height: 20px;
  padding-left: 2px;
  color: #fff;
  font-size: 14px;
  line-height: 18px;
}

.description {
  height: 13px;
  padding-left: 1px;
  border-radius: 2px;
  background: #b9dcdd;
  color: #556;
  line-height: 13px;
}

.columns {
  position: relative;
  display: grid;
  grid-template-columns: repeat(3, 1fr);
  height: 20px;
  padding-left: 1px;
  font-family: "Liberation Sans", sans-serif;
  line-height: 19px;
}

.selected {
  border: 1px solid #ecc3ab;
  border-width: 0 1px 1px 0;
  background: #fff2eec0;
}

.fields {
  border-bottom: 1px solid #97a5c4;
  background: #eef3fec0;
  font-size: 7px;
}

.handle {
  position: absolute;
  width: 4px;
  height: 4px;
  border: 1px solid #888;
  background: #fff;
}

.tl { top: -2px; left: -2px; }
.tr { top: -2px; right: -2px; }
.bl { bottom: -2px; left: -2px; }
.br { bottom: -2px; right: -2px; }

.resize {
  position: absolute;
  bottom: -5px;
  left: 50%;
}

.scrollbar {
  display: flex;
  flex-direction: column;
  align-items: center;
  width: 14px;
  gap: 4px;
  padding: 3px 2px;
}

.track {
  flex: 1;
  width: 8px;
}

.thumb {
  height: 76%;
  background: #e3e3ea;
}

/* Properties panel */
.properties {
  display: flex;
  flex-direction: column;
  width: 200px;
  margin-right: 4px;
  padding: 2px 2px 0 1px;
  border-left: 1px solid #ccc;
  font-family: "Liberation Sans", sans-serif;
}

.panel-title {
  display: flex;
  gap: 6px;
  align-items: center;
  padding-left: 2px;
  color: #888;
  font-size: 7px;
}

.panel-title span {
  flex: 1;
}

.object {
  display: flex;
  gap: 4px;
  padding: 6px 1px 4px;
}

.object .pick {
  flex: 1;
}

.object select {
  border-color: #aaa;
  background: #e6e6e6;
}

.object .pick select {
  height: 14px;
  padding: 0 2px;
  font-size: 8px;
}

.object button {
  padding: 1px;
  border: 1px solid #a9bad6;
}

.panel-tools {
  display: flex;
  align-items: center;
  gap: 2px;
  height: 18px;
  padding-left: 1px;
}

.panel-tools button {
  padding: 2px;
}

.panel-tools .on {
  background: #cfe3f7;
}

.property-box {
  flex: 1;
  min-height: 0;
  border: 1px solid #b5b5b5;
  overflow: hidden;
}

table {
  width: 100%;
  height: 438px;
  border-collapse: collapse;
  table-layout: fixed;
  font-size: 7px;
  line-height: 9px;
}

.col-mark {
  width: 14px;
}

.col-name {
  width: 48px;
}

td,
th {
  padding: 0 2px;
  border: 1px solid #f3f3f3;
  border-width: 0 0 1px 1px;
  white-space: nowrap;
  font-weight: normal;
  text-align: left;
}

tr th {
  padding: 0 0 0 1px;
}

td:first-child {
  padding: 0 3px;
  border-color: #ededf0;
  background: #ededf0;
}

td svg {
  fill: none;
  stroke: #444;
}

td .closed {
  margin-left: 1px;
  stroke: #999;
}

td b,
.section th {
  font-size: 8px;
  font-weight: bold;
}

.section th,
.current th {
  border-color: #ededf0;
  background: #ededf0;
}

.swatch {
  display: inline-block;
  width: 13px;
  height: 9px;
  margin-right: 5px;
  border: 1px solid #666;
  background: #fff;
  text-align: center;
  line-height: 7px;
  vertical-align: top;
}

.swatch.fx {
  background: #eee;
  font-style: italic;
}

.help-box {
  height: 41px;
  margin-top: 2px;
  padding: 2px 3px;
  border: 1px solid #b5b5b5;
}

.help-box p {
  font-size: 7px;
}

.panel-tabs {
  display: flex;
  gap: 3px;
  height: 16px;
  padding: 1px 0;
  font: 7px/10px Roboto, sans-serif;
}

.panel-tabs button {
  display: flex;
  align-items: center;
  gap: 4px;
  padding: 0 4px;
}

.panel-tabs .active {
  border-bottom: 1px solid #2b579a;
  color: #2b579a;
}

/* Status bar */
.statusbar {
  display: flex;
  align-items: center;
  height: 19px;
  margin: 0 0 1px 1px;
  padding-left: 7px;
  background: #2d539b;
  color: #fff;
}

.statusbar svg {
  fill: #fff;
}

.statusbar .ink {
  fill: none;
  stroke: #2d539b;
}

.units,
.checker {
  display: flex;
  align-items: center;
  gap: 8px;
}

.units {
  padding-right: 4px;
}

.checker {
  gap: 6px;
  padding: 0 6px;
}

.checker,
.cell {
  border-left: 1px solid #7d96c6;
}

.cell {
  padding: 0 4px 0 3px;
}

.zoom {
  display: flex;
  align-items: center;
  gap: 6px;
  width: 202px;
  margin-left: auto;
  padding: 0 4px 0 9px;
  border-left: 1px solid #4a6cab;
}

.zoom span {
  margin-right: 2px;
}

.zoom input {
  appearance: none;
  flex: 1;
  min-width: 0;
  height: 8px;
  margin: 0;
  background: linear-gradient(#6f8bc0, #6f8bc0) center / 100% 1px no-repeat;
}

.zoom input::-webkit-slider-thumb {
  appearance: none;
  width: 5px;
  height: 7px;
  background: #fff;
}

.zoom .grip {
  margin-left: 8px;
}
```
